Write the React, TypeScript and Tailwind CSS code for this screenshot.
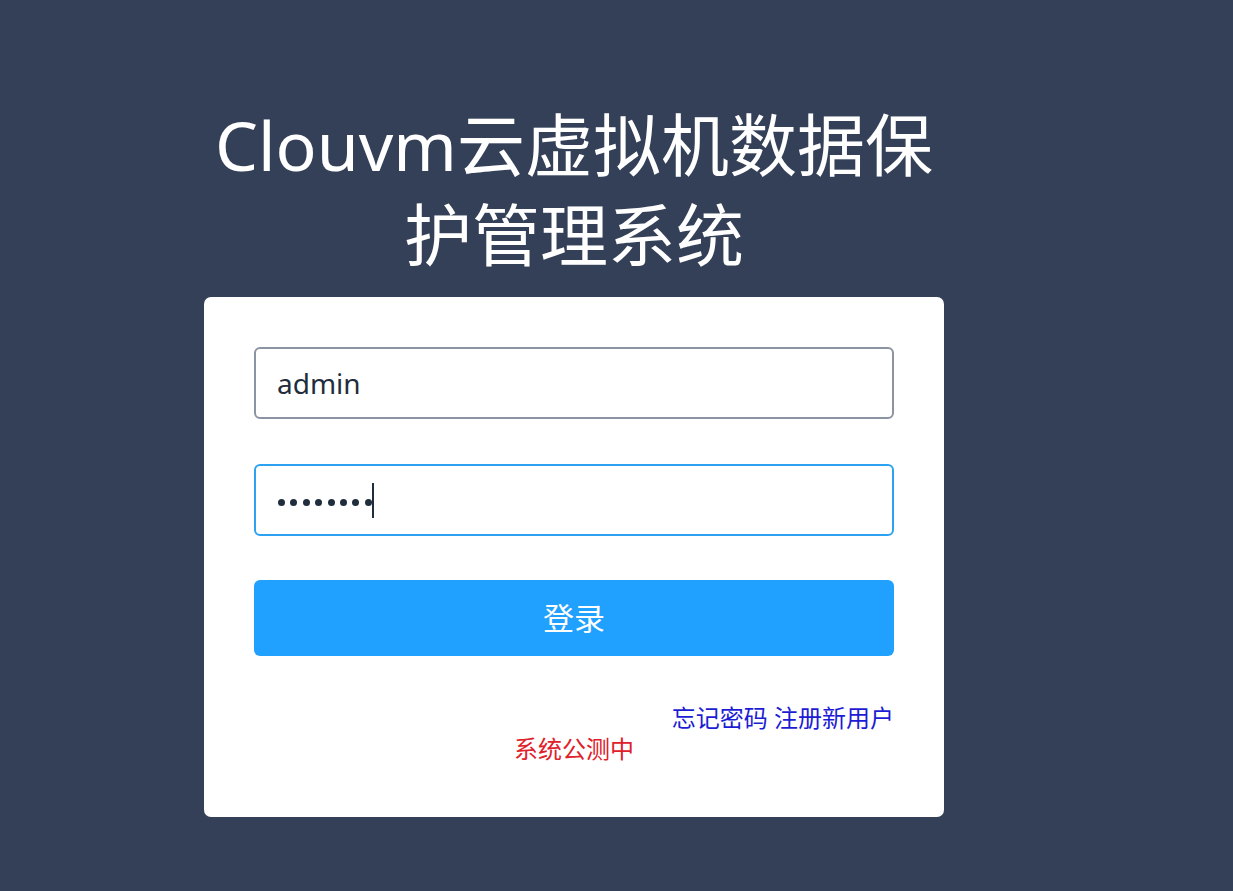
import React from "react";

const font = { fontFamily: '"Noto Sans", "Noto Sans CJK SC", sans-serif' };

export default function App() {
  const dots = [0, 1, 2, 3, 4, 5, 6, 7];
  return (
    <div className="min-h-[891px] w-full bg-[#344058]" style={font}>
      <div className="ml-[204px] w-[740px] pt-[100px]">
        <h1 className="text-center text-[68px] leading-[90px] font-normal text-white">
          Clouvm云虚拟机数据保护管理系统
        </h1>
        <div className="mt-[17px] h-[520px] rounded-[7px] bg-white px-[50px] pt-[50px]">
          <div className="flex h-[72px] items-center rounded-[6px] border-2 border-[#8a94a3] pl-[21px] text-[28px] text-[#1f2d3d]">
            admin
          </div>
          <div className="mt-[45px] flex h-[72px] items-center rounded-[6px] border-2 border-[#2ea2f2] pl-[22px]">
            <div className="mt-[4px] flex gap-[5.4px]">
              {dots.map((d) => (
                <span key={d} className="block h-[7px] w-[7px] rounded-full bg-[#1f2d3d]"></span>
              ))}
            </div>
            <span className="ml-[0px] mt-[1px] block h-[35px] w-[2px] bg-[#1f2d3d]"></span>
          </div>
          <button className="mt-[44px] flex h-[76px] w-full items-center justify-center rounded-[6px] bg-[#20a0ff] text-[31px] text-white">
            登录
          </button>
          <div className="mt-[46px] text-right text-[24px] leading-[31px] text-[#1c1cd4]">
            忘记密码 注册新用户
          </div>
          <div className="text-center text-[24px] leading-[31px] text-[#e0202a]">系统公测中</div>
        </div>
      </div>
    </div>
  );
}
